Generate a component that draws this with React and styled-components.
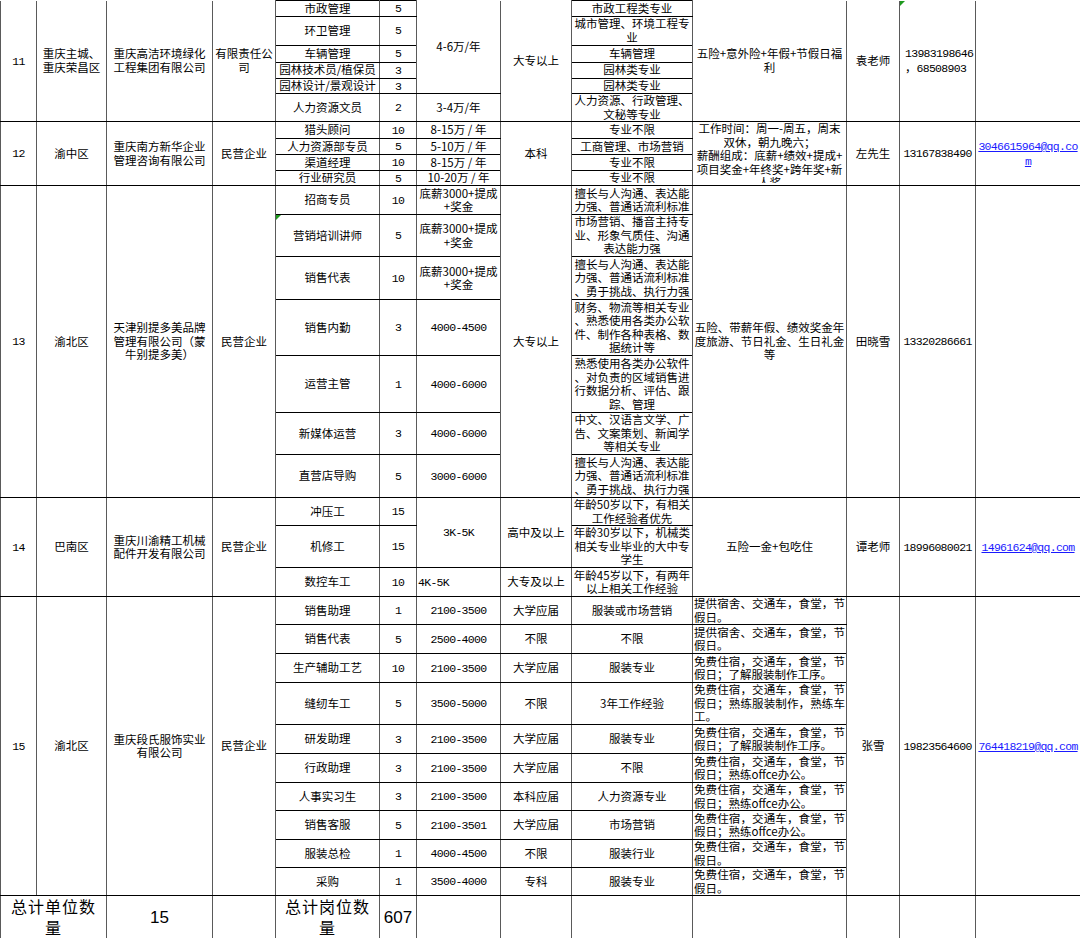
import React from 'react';
import styled, { createGlobalStyle } from 'styled-components';

const GlobalStyle = createGlobalStyle`
  html, body {
    margin: 0;
    padding: 0;
    background: #fff;
  }
  body {
    font-family: "Noto Sans CJK SC", "Noto Sans", sans-serif;
  }
`;

const COLS = [36, 70, 106, 63, 104, 37, 84, 71, 121, 154, 53, 76, 105];

const Sheet = styled.div`
  width: 1080px;
  height: 938px;
  overflow: hidden;
  background: #fff;
`;

const Table = styled.table`
  width: 1080px;
  table-layout: fixed;
  border-collapse: collapse;
  font-size: 11.5px;
  line-height: 13.5px;
  color: #000;
`;

const Row = styled.tr`
  height: ${p => p.$h}px;
`;

const Td = styled.td`
  position: relative;
  padding: 0 1px;
  border-top: ${p => (p.$open ? 'none' : '1px solid #000')};
  border-bottom: 1px solid #000;
  border-left: 1px solid #5a5a5a;
  border-right: 1px solid #5a5a5a;
  text-align: ${p => p.$align || 'center'};
  vertical-align: ${p => p.$valign || 'middle'};
  white-space: ${p => (p.$just ? 'normal' : 'nowrap')};
  overflow: hidden;
  ${p => p.$just && 'text-align: justify; line-break: strict;'}
  ${p => p.$pl && `padding-left: ${p.$pl}px;`}
  ${p => p.$big && 'font-size: 16px; line-height: 21px; letter-spacing: 1px;'}

  ${p => p.$note && `
    &::before {
      content: '';
      position: absolute;
      left: 0;
      top: 0;
      border-top: 5px solid #1f9a1f;
      border-right: 5px solid transparent;
    }
  `}
`;

const Clip = styled.div`
  height: ${p => p.$h}px;
  overflow: hidden;
`;

const Num = styled.span`
  font-family: "Liberation Mono", "DejaVu Sans Mono", monospace;
  font-size: 11.5px;
  letter-spacing: -0.7px;
`;

const BigNum = styled.span`
  font-family: "Liberation Sans", Arial, sans-serif;
  font-size: 17px;
  letter-spacing: 0;
`;

const Mail = styled.a`
  font-family: "Liberation Mono", "DejaVu Sans Mono", monospace;
  font-size: 11.5px;
  letter-spacing: -0.7px;
  color: #1a1aff;
  text-decoration: underline;
`;

function Lines({ children }) {
  return children.split('\n').map((t, i) => (
    <React.Fragment key={i}>
      {i > 0 && <br />}
      {t}
    </React.Fragment>
  ));
}

const job15 = [
  ['销售助理', '1', '2100-3500', '大学应届', '服装或市场营销', '提供宿舍、交通车，食堂，节假日。', 28],
  ['销售代表', '5', '2500-4000', '不限', '不限', '提供宿舍、交通车，食堂，节假日。', 29],
  ['生产辅助工艺', '10', '2100-3500', '大学应届', '服装专业', '免费住宿，交通车，食堂，节假日；了解服装制作工序。', 29],
  ['缝纫车工', '5', '3500-5000', '不限', '3年工作经验', '免费住宿，交通车，食堂，节假日；熟练服装制作，熟练车工。', 42],
  ['研发助理', '3', '2100-3500', '大学应届', '服装专业', '免费住宿，交通车，食堂，节假日；了解服装制作工序。', 29],
  ['行政助理', '3', '2100-3500', '大学应届', '不限', '免费住宿，交通车，食堂，节假日；熟练offce办公。', 29],
  ['人事实习生', '3', '2100-3500', '本科应届', '人力资源专业', '免费住宿，交通车，食堂，节假日；熟练offce办公。', 28],
  ['销售客服', '5', '2100-3501', '大学应届', '市场营销', '免费住宿，交通车，食堂，节假日；熟练offce办公。', 29],
  ['服装总检', '1', '4000-4500', '不限', '服装行业', '免费住宿，交通车，食堂，节假日。', 28],
  ['采购', '1', '3500-4000', '专科', '服装专业', '免费住宿，交通车，食堂，节假日。', 28],
];

const job13 = [
  ['招商专员', '10', '底薪3000+提成\n+奖金', '擅长与人沟通、表达能\n力强、普通话流利标准', 29],
  ['营销培训讲师', '5', '底薪3000+提成\n+奖金', '市场营销、播音主持专\n业、形象气质佳、沟通\n表达能力强', 42],
  ['销售代表', '10', '底薪3000+提成\n+奖金', '擅长与人沟通、表达能\n力强、普通话流利标准\n、勇于挑战、执行力强', 43],
  ['销售内勤', '3', '4000-4500', '财务、物流等相关专业\n、熟悉使用各类办公软\n件、制作各种表格、数\n据统计等', 56],
  ['运营主管', '1', '4000-6000', '熟悉使用各类办公软件\n、对负责的区域销售进\n行数据分析、评估、跟\n踪、管理', 57],
  ['新媒体运营', '3', '4000-6000', '中文、汉语言文学、广\n告、文案策划、新闻学\n等相关专业', 42],
  ['直营店导购', '5', '3000-6000', '擅长与人沟通、表达能\n力强、普通话流利标准\n、勇于挑战、执行力强', 43],
];

const isNum = s => /^[0-9-]+$/.test(s);

export default function App() {
  return (
    <Sheet>
      <GlobalStyle />
      <Table>
        <colgroup>
          {COLS.map((w, i) => <col key={i} style={{ width: w }} />)}
        </colgroup>
        <tbody>
          {/* 11 */}
          <Row $h={15}>
            <Td rowSpan={6} $open><Num>11</Num></Td>
            <Td rowSpan={6} $open><Lines>{'重庆主城、\n重庆荣昌区'}</Lines></Td>
            <Td rowSpan={6} $open><Lines>{'重庆高洁环境绿化\n工程集团有限公司'}</Lines></Td>
            <Td rowSpan={6} $open><Lines>{'有限责任公\n司'}</Lines></Td>
            <Td>市政管理</Td>
            <Td><Num>5</Num></Td>
            <Td rowSpan={5} $open>4-6万/年</Td>
            <Td rowSpan={6} $open>大专以上</Td>
            <Td>市政工程类专业</Td>
            <Td rowSpan={6} $open><Lines>{'五险+意外险+年假+节假日福\n利'}</Lines></Td>
            <Td rowSpan={6} $open>袁老师</Td>
            <Td rowSpan={6} $open $note $align="left" $pl={5}><Num><Lines>{'13983198646\n'}</Lines></Num>，<Num>68508903</Num></Td>
            <Td rowSpan={6} $open />
          </Row>
          <Row $h={29}>
            <Td>环卫管理</Td>
            <Td><Num>5</Num></Td>
            <Td><Lines>{'城市管理、环境工程专\n业'}</Lines></Td>
          </Row>
          <Row $h={17}>
            <Td>车辆管理</Td>
            <Td><Num>5</Num></Td>
            <Td>车辆管理</Td>
          </Row>
          <Row $h={16}>
            <Td>园林技术员/植保员</Td>
            <Td><Num>3</Num></Td>
            <Td>园林类专业</Td>
          </Row>
          <Row $h={15}>
            <Td>园林设计/景观设计</Td>
            <Td><Num>3</Num></Td>
            <Td>园林类专业</Td>
          </Row>
          <Row $h={28}>
            <Td>人力资源文员</Td>
            <Td><Num>2</Num></Td>
            <Td>3-4万/年</Td>
            <Td><Lines>{'人力资源、行政管理、\n文秘等专业'}</Lines></Td>
          </Row>

          {/* 12 */}
          <Row $h={17}>
            <Td rowSpan={4}><Num>12</Num></Td>
            <Td rowSpan={4}>渝中区</Td>
            <Td rowSpan={4}><Lines>{'重庆南方新华企业\n管理咨询有限公司'}</Lines></Td>
            <Td rowSpan={4}>民营企业</Td>
            <Td>猎头顾问</Td>
            <Td><Num>10</Num></Td>
            <Td>8-15万 / 年</Td>
            <Td rowSpan={4}>本科</Td>
            <Td>专业不限</Td>
            <Td rowSpan={4} $valign="top">
              <Clip $h={61}>
                <Lines>{'工作时间：周一-周五，周末\n双休，朝九晚六；\n薪酬组成：底薪+绩效+提成+\n项目奖金+年终奖+跨年奖+新\n人奖'}</Lines>
              </Clip>
            </Td>
            <Td rowSpan={4}>左先生</Td>
            <Td rowSpan={4}><Num>13167838490</Num></Td>
            <Td rowSpan={4}><Mail href="#"><Lines>{'3046615964@qq.co\nm'}</Lines></Mail></Td>
          </Row>
          <Row $h={16}>
            <Td>人力资源部专员</Td>
            <Td><Num>5</Num></Td>
            <Td>5-10万 / 年</Td>
            <Td>工商管理、市场营销</Td>
          </Row>
          <Row $h={15}>
            <Td>渠道经理</Td>
            <Td><Num>10</Num></Td>
            <Td>8-15万 / 年</Td>
            <Td>专业不限</Td>
          </Row>
          <Row $h={15}>
            <Td>行业研究员</Td>
            <Td><Num>5</Num></Td>
            <Td>10-20万 / 年</Td>
            <Td>专业不限</Td>
          </Row>

          {/* 13 */}
          {job13.map(([pos, n, pay, major, h], i) => (
            <Row key={pos + i} $h={h}>
              {i === 0 && (
                <>
                  <Td rowSpan={7}><Num>13</Num></Td>
                  <Td rowSpan={7}>渝北区</Td>
                  <Td rowSpan={7}><Lines>{'天津别提多美品牌\n管理有限公司（蒙\n牛别提多美）'}</Lines></Td>
                  <Td rowSpan={7}>民营企业</Td>
                </>
              )}
              <Td $note={i === 1}>{pos}</Td>
              <Td><Num>{n}</Num></Td>
              <Td>{isNum(pay) ? <Num>{pay}</Num> : <Lines>{pay}</Lines>}</Td>
              {i === 0 && <Td rowSpan={7}>大专以上</Td>}
              <Td><Lines>{major}</Lines></Td>
              {i === 0 && (
                <>
                  <Td rowSpan={7}><Lines>{'五险、带薪年假、绩效奖金年\n度旅游、节日礼金、生日礼金\n等'}</Lines></Td>
                  <Td rowSpan={7}>田晓雪</Td>
                  <Td rowSpan={7}><Num>13320286661</Num></Td>
                  <Td rowSpan={7} />
                </>
              )}
            </Row>
          ))}

          {/* 14 */}
          <Row $h={27}>
            <Td rowSpan={3}><Num>14</Num></Td>
            <Td rowSpan={3}>巴南区</Td>
            <Td rowSpan={3}><Lines>{'重庆川渝精工机械\n配件开发有限公司'}</Lines></Td>
            <Td rowSpan={3}>民营企业</Td>
            <Td>冲压工</Td>
            <Td><Num>15</Num></Td>
            <Td rowSpan={2}><Num>3K-5K</Num></Td>
            <Td rowSpan={2}>高中及以上</Td>
            <Td><Lines>{'年龄50岁以下，有相关\n工作经验者优先'}</Lines></Td>
            <Td rowSpan={3}>五险一金+包吃住</Td>
            <Td rowSpan={3}>谭老师</Td>
            <Td rowSpan={3}><Num>18996080021</Num></Td>
            <Td rowSpan={3}><Mail href="#">14961624@qq.com</Mail></Td>
          </Row>
          <Row $h={42}>
            <Td>机修工</Td>
            <Td><Num>15</Num></Td>
            <Td><Lines>{'年龄30岁以下，机械类\n相关专业毕业的大中专\n学生'}</Lines></Td>
          </Row>
          <Row $h={29}>
            <Td>数控车工</Td>
            <Td><Num>10</Num></Td>
            <Td $align="left"><Num>4K-5K</Num></Td>
            <Td>大专及以上</Td>
            <Td><Lines>{'年龄45岁以下，有两年\n以上相关工作经验'}</Lines></Td>
          </Row>

          {/* 15 */}
          {job15.map(([pos, n, pay, edu, major, perk, h], i) => (
            <Row key={pos + i} $h={h}>
              {i === 0 && (
                <>
                  <Td rowSpan={10}><Num>15</Num></Td>
                  <Td rowSpan={10}>渝北区</Td>
                  <Td rowSpan={10}><Lines>{'重庆段氏服饰实业\n有限公司'}</Lines></Td>
                  <Td rowSpan={10}>民营企业</Td>
                </>
              )}
              <Td>{pos}</Td>
              <Td><Num>{n}</Num></Td>
              <Td><Num>{pay}</Num></Td>
              <Td>{edu}</Td>
              <Td>{major}</Td>
              <Td $just>{perk}</Td>
              {i === 0 && (
                <>
                  <Td rowSpan={10}>张雪</Td>
                  <Td rowSpan={10}><Num>19823564600</Num></Td>
                  <Td rowSpan={10}><Mail href="#">764418219@qq.com</Mail></Td>
                </>
              )}
            </Row>
          ))}

          {/* totals */}
          <Row $h={43}>
            <Td colSpan={2} $big><Lines>{'总计单位数\n量'}</Lines></Td>
            <Td $big><BigNum>15</BigNum></Td>
            <Td />
            <Td $big><Lines>{'总计岗位数\n量'}</Lines></Td>
            <Td $big><BigNum>607</BigNum></Td>
            <Td />
            <Td />
            <Td />
            <Td />
            <Td />
            <Td />
            <Td />
          </Row>
        </tbody>
      </Table>
    </Sheet>
  );
}
